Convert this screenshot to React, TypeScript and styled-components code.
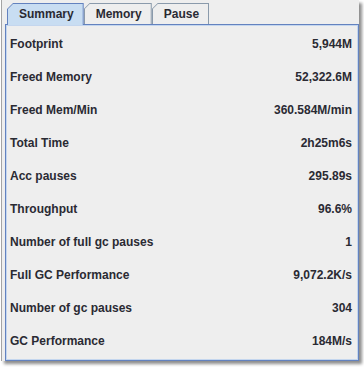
import React from "react";
import styled, { createGlobalStyle } from "styled-components";

const Global = createGlobalStyle`
  html, body { margin: 0; padding: 0; background: #ffffff; }
  body { font-family: "Liberation Sans", Arial, sans-serif; }
`;

const Page = styled.div`
  width: 364px;
  height: 367px;
  background: #ffffff;
  overflow: hidden;
`;

const Window = styled.div`
  box-sizing: border-box;
  margin-left: 1px;
  width: 358px;
  height: 361px;
  border-left: 1px solid #a4a4a4;
  background: #eeeeee;
  padding: 3px 0 0 3px;
  display: flex;
  flex-direction: column;
  box-shadow: 3px 3px 3px rgba(0, 0, 0, 0.45);
`;

const TabStrip = styled.div`
  display: flex;
  align-items: flex-end;
  height: 21px;
  padding-left: 2px;
  position: relative;
  z-index: 1;
`;

const TabOuter = styled.div<{ $active?: boolean }>`
  height: ${(p) => (p.$active ? 22 : 21)}px;
  margin-bottom: ${(p) => (p.$active ? -1 : 0)}px;
  background: ${(p) => (p.$active ? "#6382bf" : "#8a9aab")};
  clip-path: polygon(0 6px, 6px 0, 100% 0, 100% 100%, 0 100%);
  display: flex;
`;

const TabInner = styled.div<{ $active?: boolean }>`
  margin: 1px 1px 0 1px;
  padding: 0 9px 0 11px;
  background: ${(p) => (p.$active ? "#c8ddf2" : "#eeeeee")};
  clip-path: polygon(0 5px, 5px 0, 100% 0, 100% 100%, 0 100%);
  display: flex;
  align-items: center;
  font-size: 12px;
  font-weight: bold;
  color: #2a2a33;
  padding-bottom: ${(p) => (p.$active ? 1 : 0)}px;
`;

const Content = styled.div`
  box-sizing: border-box;
  width: 354px;
  height: 337px;
  border: 1px solid #6382bf;
  box-shadow: inset 0 0 0 1px #c4d6ee;
  padding: 2px 6px 0 4px;
  display: flex;
  flex-direction: column;
`;

const Row = styled.div`
  height: 33px;
  display: flex;
  align-items: center;
  justify-content: space-between;
  font-size: 12px;
  font-weight: bold;
  color: #2a2a33;
`;

const rows: [string, string][] = [
  ["Footprint", "5,944M"],
  ["Freed Memory", "52,322.6M"],
  ["Freed Mem/Min", "360.584M/min"],
  ["Total Time", "2h25m6s"],
  ["Acc pauses", "295.89s"],
  ["Throughput", "96.6%"],
  ["Number of full gc pauses", "1"],
  ["Full GC Performance", "9,072.2K/s"],
  ["Number of gc pauses", "304"],
  ["GC Performance", "184M/s"],
];

const tabs = ["Summary", "Memory", "Pause"];

export default function App() {
  return (
    <Page>
      <Global />
      <Window>
        <TabStrip>
          {tabs.map((t, i) => (
            <TabOuter key={t} $active={i === 0}>
              <TabInner $active={i === 0}>{t}</TabInner>
            </TabOuter>
          ))}
        </TabStrip>
        <Content>
          {rows.map(([k, v]) => (
            <Row key={k}>
              <span>{k}</span>
              <span>{v}</span>
            </Row>
          ))}
        </Content>
      </Window>
    </Page>
  );
}
